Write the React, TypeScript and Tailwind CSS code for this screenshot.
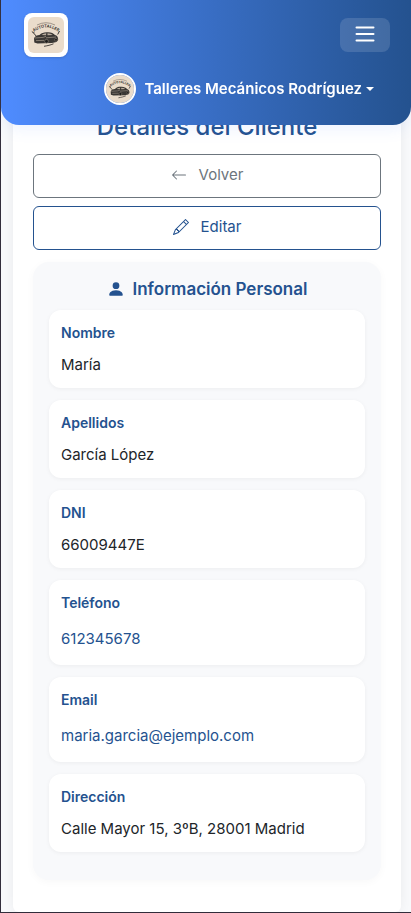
import type { ReactNode } from 'react';
import { BsArrowLeft, BsPencil, BsPersonFill } from 'react-icons/bs';

type Field = { label: string; value: string; href?: string };

const fields: Field[] = [
  { label: 'Nombre', value: 'María' },
  { label: 'Apellidos', value: 'García López' },
  { label: 'DNI', value: '66009447E' },
  { label: 'Teléfono', value: '612345678', href: 'tel:612345678' },
  { label: 'Email', value: 'maria.garcia@ejemplo.com', href: 'mailto:maria.garcia@ejemplo.com' },
  { label: 'Dirección', value: 'Calle Mayor 15, 3ºB, 28001 Madrid' },
];

function WorkshopLogo({ arc, className }: { arc: string; className: string }) {
  return (
    <svg viewBox="0 0 36 36" className={className} aria-hidden="true">
      <rect width="36" height="36" fill="#eadccb" />
      <path id={arc} d="M5 15.5 Q18 5.5 31 15.5" fill="none" />
      <text fontSize="4" fontWeight="700" fill="#3b3733" fontFamily="Inter, sans-serif" textAnchor="middle">
        <textPath href={`#${arc}`} startOffset="50%">AUTOTALLER</textPath>
      </text>
      <path d="M9 8 Q18 3.5 27 8" fill="none" stroke="#6b645c" strokeWidth="0.6" />
      <path d="M3.8 14.5 l1.5 1.2 1.2 -0.6 M5.3 15.7 l3 3.5 M31.5 14 l-1.8 3.5" fill="none" stroke="#3b3733" strokeWidth="1" />
      <path d="M6 21.5 C6.5 19 9 18.4 11.500 18 C13.5 15.7 16 15 20 15.2 C23.5 15.300 25.5 16.4 27 18 C29 18.500 30.3 20 30.2 23 L28.500 25 L24 26 L9.500 26.500 L6.3 25.500 Z" fill="#3a3734" />
      <path d="M13.5 18 Q15.500 16.3 18.3 16.3 L18 18.2 Z M19.5 16.3 Q23 16.3 24.8 18 L19.5 18.200 Z" fill="#b8ac9d" />
      <path d="M6.8 21 L15 20.4 L18 19.4 M8 23.6 L16 23.4 M18 20.8 L28 20" fill="none" stroke="#a3988a" strokeWidth="0.7" />
      <circle cx="18.5" cy="24.300" r="1.9" fill="#1d1c1b" stroke="#a3988a" strokeWidth="0.5" />
      <circle cx="28" cy="22.8" r="1.4" fill="#1d1c1b" stroke="#a3988a" strokeWidth="0.4" />
      <path d="M16 29.300 Q19 28.8 21 28.3 T25.500 26.800" fill="none" stroke="#3b3733" strokeWidth="0.9" />
    </svg>
  );
}

function OutlineLink({ href, tone, icon, children }: { href: string; tone: string; icon: ReactNode; children: ReactNode }) {
  return (
    <a href={href} className={`flex h-11 items-start justify-center gap-3 rounded-md border bg-white pt-2 text-[15px] leading-6 ${tone}`}>
      <span className="flex h-6 items-center">{icon}</span>
      {children}
    </a>
  );
}

function FieldCard({ label, value, href }: Field) {
  return (
    <div className="rounded-xl bg-white px-3 pt-3 pb-2.5 shadow-[0_1px_4px_rgba(0,0,0,0.05)]">
      <dt className="mb-2 text-sm leading-[22px] font-semibold text-[#24528f]">{label}</dt>
      <dd className="text-[15px] leading-[26px] font-normal text-[#212529]">
        {href ? (
          <a href={href} className="flex h-[33px] items-center text-[#24528f]">{value}</a>
        ) : (
          value
        )}
      </dd>
    </div>
  );
}

export default function App() {
  return (
    <div className="min-h-screen border-b border-l border-[#332e3c] bg-[#f8f9fb] font-[Inter,'Liberation_Sans',sans-serif]">
      <header className="fixed top-0 right-0 left-px z-10 rounded-b-[18px] bg-linear-to-r from-[#4f8cff] to-[#24528f] pt-3 pr-[21px] pb-5 pl-[23px] shadow-[0_4px_16px_rgba(79,140,255,0.10)]">
        <div className="flex items-center justify-between">
          <a href="#inicio" aria-label="Inicio" className="mt-px block rounded-lg bg-white p-1 shadow-sm">
            <WorkshopLogo arc="arc-brand" className="size-9 rounded-md" />
          </a>
          <button type="button" aria-label="Abrir menú" className="flex h-[34px] w-[50px] items-center justify-center rounded-lg bg-white/13">
            <svg viewBox="0 0 24 24" className="size-6" fill="none" stroke="#ffffff" strokeWidth="2" strokeLinecap="round" aria-hidden="true">
              <path d="M3.5 4.5 H20.5 M3.5 11 H20.5 M3.5 17.5 H20.5" />
            </svg>
          </button>
        </div>
        <button type="button" className="mt-4 mr-4 ml-auto flex items-center gap-2 text-[15px] leading-6 font-semibold text-white">
          <WorkshopLogo arc="arc-user" className="size-8 rounded-full border-2 border-white" />
          <span className="flex items-center gap-1">
            Talleres Mecánicos Rodríguez
            <span className="border-x-4 border-t-4 border-x-transparent border-t-white" />
          </span>
        </button>
      </header>

      <main className="mr-[10px] ml-3 rounded-b-md bg-white px-5 pt-28 pb-8 shadow-[0_0_12px_rgba(0,0,0,0.06)]">
        <h1 className="mb-3 text-center text-2xl leading-[30px] font-medium text-[#24528f]">Detalles del Cliente</h1>
        <div className="flex flex-col gap-2">
          <OutlineLink href="#clientes" tone="border-[#6c757d] text-[#6c757d]" icon={<BsArrowLeft className="size-4" />}>
            Volver
          </OutlineLink>
          <OutlineLink href="#editar" tone="border-[#24528f] text-[#24528f]" icon={<BsPencil className="size-4" />}>
            Editar
          </OutlineLink>
        </div>
        <section className="mt-3 rounded-2xl bg-[#f8f9fb] px-4 pt-[15px] pb-7 shadow-[0_2px_8px_rgba(0,0,0,0.03)]">
          <h2 className="mb-[9px] flex items-center justify-center gap-2 text-[17px] leading-6 font-semibold text-[#24528f]">
            <BsPersonFill className="size-[18px]" />
            Información Personal
          </h2>
          <dl className="flex flex-col gap-3">
            {fields.map((field) => (
              <FieldCard key={field.label} {...field} />
            ))}
          </dl>
        </section>
      </main>
    </div>
  );
}
